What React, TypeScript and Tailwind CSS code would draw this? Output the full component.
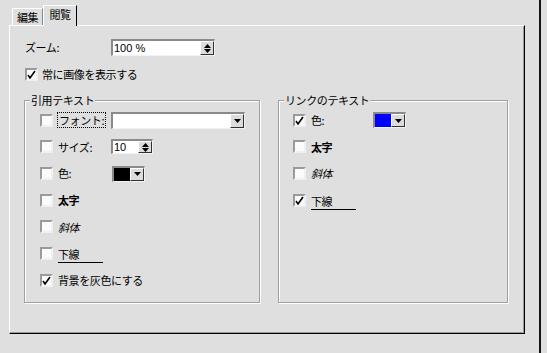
import React from "react";

const jp = "font-['Noto_Sans_CJK_JP','Noto_Sans',sans-serif] text-[11px] tracking-[-0.4px] text-black";

function Check() {
  return (
    <svg width="9" height="9" viewBox="0 0 9 9" className="block">
      <path d="M1 5 L3 8 L8 1" stroke="#000" strokeWidth="1.6" fill="none" />
    </svg>
  );
}

function Box({ checked }: { checked?: boolean }) {
  return (
    <div className="w-[13px] h-[13px] shrink-0 bg-[#fbfbfb] border-2 border-t-[#9a9a9a] border-l-[#9a9a9a] border-r-[#f0f0f0] border-b-[#f0f0f0] flex items-end justify-start">
      {checked && <Check />}
    </div>
  );
}

function DownTri() {
  return (
    <svg width="7" height="4" viewBox="0 0 7 4" className="block">
      <path d="M0 0 H7 L3.5 4 Z" fill="#000" />
    </svg>
  );
}

function DropBtn() {
  return (
    <div className="w-[14px] h-full shrink-0 bg-[#dcdcdc] border border-t-white border-l-white border-r-[#303030] border-b-[#303030] flex items-center justify-center">
      <DownTri />
    </div>
  );
}

function SpinBtn() {
  return (
    <div className="w-[14px] h-full shrink-0 bg-[#dcdcdc] border border-t-white border-l-white border-r-[#303030] border-b-[#303030] flex flex-col items-center justify-center gap-[1px]">
      <svg width="7" height="4" viewBox="0 0 7 4" className="block">
        <path d="M0 4 H7 L3.5 0 Z" fill="#000" />
      </svg>
      <svg width="7" height="4" viewBox="0 0 7 4" className="block">
        <path d="M0 0 H7 L3.5 4 Z" fill="#000" />
      </svg>
    </div>
  );
}

function Sunken({ className, children }: { className: string; children?: React.ReactNode }) {
  return (
    <div
      className={
        "flex items-stretch bg-white border-t-2 border-l-2 border-t-[#8a8a8a] border-l-[#8a8a8a] border-r border-b border-r-[#f2f2f2] border-b-[#f2f2f2] " +
        className
      }
    >
      {children}
    </div>
  );
}

function ColorCombo({ color }: { color: string }) {
  return (
    <Sunken className="w-[33px] h-[16px]">
      <div className="flex-1" style={{ backgroundColor: color }} />
      <DropBtn />
    </Sunken>
  );
}

function Row({ children }: { children: React.ReactNode }) {
  return <div className="h-[26.67px] flex items-center">{children}</div>;
}

function Group({
  title,
  className,
  children,
}: {
  title: string;
  className: string;
  children: React.ReactNode;
}) {
  return (
    <div
      className={
        "border border-[#a0a0a0] shadow-[inset_1px_1px_0_#fff,1px_1px_0_#fff] flex flex-col " + className
      }
    >
      <div className={"-mt-[7px] ml-[5px] px-[1px] w-fit bg-[#dfdfdf] leading-[12px] " + jp}>{title}</div>
      {children}
    </div>
  );
}

export default function App() {
  return (
    <div className="w-[547px] h-[353px] bg-[#dfdfdf] flex overflow-hidden">
      <div className="w-[539px] flex flex-col">
        {/* tabs */}
        <div className="h-[25px] flex items-end pl-[12px]">
          <div
            className={
              "w-[31px] h-[17px] border-t border-l border-t-white border-l-white border-r border-r-[#8a8a8a] flex items-center justify-center leading-none " +
              jp
            }
          >
            編集
          </div>
          <div
            className={
              "relative z-10 -mb-[1px] w-[34px] h-[21px] bg-[#dfdfdf] border-t border-l border-t-white border-l-white border-r border-r-black flex items-start pt-[3px] justify-center leading-none " +
              jp
            }
          >
            閲覧
          </div>
        </div>
        {/* panel */}
        <div className="ml-[9px] w-[516px] h-[309px] border-l border-t border-l-white border-t-white border-r border-b border-r-black border-b-black shadow-[inset_-1px_-1px_0_#9a9a9a] pt-[13px] pl-[14px] flex flex-col">
          <div className="h-[17px] flex items-center ml-[1px]">
            <div className={"w-[86px] " + jp}>ズーム:</div>
            <Sunken className="w-[104px] h-[17px]">
              <div className="flex-1 pl-[1px] font-['Liberation_Sans',sans-serif] text-[11px] text-black leading-[14px]">
                100 %
              </div>
              <SpinBtn />
            </Sunken>
          </div>
          <div className="mt-[12px] h-[13px] flex items-center gap-[4px] ml-[1px]">
            <Box checked />
            <div className={jp}>常に画像を表示する</div>
          </div>
          <div className="mt-[19px] flex gap-[18px]">
            <Group title="引用テキスト" className="w-[236px] h-[203px]">
              <div className="pl-[15px] pt-[1px] flex flex-col">
                <Row>
                  <Box />
                  <div className="w-[58px] pl-[4px]">
                    <div className={"w-fit px-[1px] py-[1px] border border-dotted border-black leading-[12px] " + jp}>
                      フォント:
                    </div>
                  </div>
                  <Sunken className="w-[134px] h-[17px]">
                    <div className="flex-1" />
                    <DropBtn />
                  </Sunken>
                </Row>
                <Row>
                  <Box />
                  <div className={"w-[58px] pl-[5px] " + jp}>サイズ:</div>
                  <Sunken className="w-[42px] h-[15px]">
                    <div className="flex-1 pl-[1px] font-['Liberation_Sans',sans-serif] text-[11px] text-black leading-[12px]">
                      10
                    </div>
                    <SpinBtn />
                  </Sunken>
                </Row>
                <Row>
                  <Box />
                  <div className={"w-[59px] pl-[5px] " + jp}>色:</div>
                  <ColorCombo color="#000000" />
                </Row>
                <Row>
                  <Box />
                  <div className={"pl-[5px] font-bold " + jp}>太字</div>
                </Row>
                <Row>
                  <Box />
                  <div className={"pl-[5px] italic " + jp}>斜体</div>
                </Row>
                <Row>
                  <Box />
                  <div className="pl-[5px]">
                    <div className={"w-[45px] border-b border-black leading-[13px] pb-[1px] translate-y-[2px] " + jp}>下線</div>
                  </div>
                </Row>
                <Row>
                  <Box checked />
                  <div className={"pl-[5px] " + jp}>背景を灰色にする</div>
                </Row>
              </div>
            </Group>
            <Group title="リンクのテキスト" className="w-[230px] h-[203px]">
              <div className="pl-[14px] pt-[1px] flex flex-col">
                <Row>
                  <Box checked />
                  <div className={"w-[67px] pl-[5px] " + jp}>色:</div>
                  <ColorCombo color="#0000ff" />
                </Row>
                <Row>
                  <Box />
                  <div className={"pl-[5px] font-bold " + jp}>太字</div>
                </Row>
                <Row>
                  <Box />
                  <div className={"pl-[5px] italic " + jp}>斜体</div>
                </Row>
                <Row>
                  <Box checked />
                  <div className="pl-[5px]">
                    <div className={"w-[45px] border-b border-black leading-[13px] pb-[1px] translate-y-[2px] " + jp}>下線</div>
                  </div>
                </Row>
              </div>
            </Group>
          </div>
        </div>
      </div>
      <div className="w-[2px] h-full bg-[#151515]" />
    </div>
  );
}
